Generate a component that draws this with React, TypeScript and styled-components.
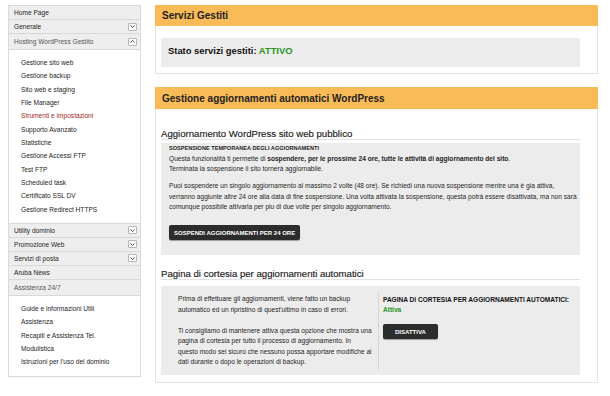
import React from 'react';
import styled, { createGlobalStyle } from 'styled-components';

const GlobalStyle = createGlobalStyle`
  html, body {
    margin: 0;
    padding: 0;
    background: #ffffff;
  }
  body {
    font-family: "Liberation Sans", Arial, Helvetica, sans-serif;
    color: #222222;
  }
  * {
    box-sizing: border-box;
  }
`;

type MenuEntry = {
  label: string;
  chevron?: 'down' | 'up';
  open?: boolean;
  children?: { label: string; active?: boolean }[];
};

const menu: MenuEntry[] = [
  { label: 'Home Page' },
  { label: 'Generale', chevron: 'down' },
  {
    label: 'Hosting WordPress Gestito',
    chevron: 'up',
    open: true,
    children: [
      { label: 'Gestione sito web' },
      { label: 'Gestione backup' },
      { label: 'Sito web e staging' },
      { label: 'File Manager' },
      { label: 'Strumenti e impostazioni', active: true },
      { label: 'Supporto Avanzato' },
      { label: 'Statistiche' },
      { label: 'Gestione Accessi FTP' },
      { label: 'Test FTP' },
      { label: 'Scheduled task' },
      { label: 'Certificato SSL DV' },
      { label: 'Gestione Redirect HTTPS' },
    ],
  },
  { label: 'Utility dominio', chevron: 'down' },
  { label: 'Promozione Web', chevron: 'down' },
  { label: 'Servizi di posta', chevron: 'down' },
  { label: 'Aruba News' },
  {
    label: 'Assistenza 24/7',
    open: true,
    children: [
      { label: 'Guide e informazioni Utili' },
      { label: 'Assistenza' },
      { label: 'Recapiti e Assistenza Tel.' },
      { label: 'Modulistica' },
      { label: "Istruzioni per l'uso del dominio" },
    ],
  },
];

// courtesy column keeps the original line breaks
const courtesyParas = [
  [
    'Prima di effettuare gli aggiornamenti, viene fatto un backup',
    "automatico ed un ripristino di quest'ultimo in caso di errori.",
  ],
  [
    'Ti consigliamo di mantenere attiva questa opzione che mostra una',
    'pagina di cortesia per tutto il processo di aggiornamento. In',
    'questo modo sei sicuro che nessuno possa apportare modifiche ai',
    'dati durante o dopo le operazioni di backup.',
  ],
];

const Chevron = ({ dir }: { dir: 'down' | 'up' }) => (
  <ChevronBox>
    <svg width="5" height="3" viewBox="0 0 5 3">
      <polyline
        points={dir === 'down' ? '0.5,0.5 2.5,2.5 4.5,0.5' : '0.5,2.5 2.5,0.5 4.5,2.5'}
        fill="none"
        stroke="#333"
        strokeWidth="0.9"
      />
    </svg>
  </ChevronBox>
);

const App = () => {
  return (
    <>
      <GlobalStyle />
      <Page>
        <Sidebar>
          {menu.map((entry) => (
            <React.Fragment key={entry.label}>
              <MenuRow $open={entry.open}>
                <span>{entry.label}</span>
                {entry.chevron && <Chevron dir={entry.chevron} />}
              </MenuRow>
              {entry.children && (
                <SubMenu>
                  {entry.children.map((c) => (
                    <SubItem key={c.label} $active={c.active}>
                      {c.label}
                    </SubItem>
                  ))}
                </SubMenu>
              )}
            </React.Fragment>
          ))}
        </Sidebar>

        <Main>
          <Panel>
            <PanelHeader $height={21}>Servizi Gestiti</PanelHeader>
            <StatusBody>
              <StatusBox>
                Stato servizi gestiti: <Green>ATTIVO</Green>
              </StatusBox>
            </StatusBody>
          </Panel>

          <Panel>
            <PanelHeader $height={22}>Gestione aggiornamenti automatici WordPress</PanelHeader>
            <UpdatesBody>
              <SectionTitle $gap={3}>Aggiornamento WordPress sito web pubblico</SectionTitle>
              <InfoBox>
                <Para>
                  <BoxHeading>SOSPENSIONE TEMPORANEA DEGLI AGGIORNAMENTI</BoxHeading>
                  <br />
                  Questa funzionalità ti permette di{' '}
                  <b>sospendere, per le prossime 24 ore, tutte le attività di aggiornamento del sito</b>.
                  <br />
                  Terminata la sospensione il sito tornerà aggiornabile.
                </Para>
                <Para>
                  Puoi sospendere un singolo aggiornamento al massimo 2 volte (48 ore). Se richiedi una nuova
                  sospensione mentre una è gia attiva, verranno aggiunte altre 24 ore alla data di fine
                  sospensione. Una volta attivata la sospensione, questa potrà essere disattivata, ma non sarà
                  comunque possibile attivarla per piu di due volte per singolo aggiornamento.
                </Para>
                <DarkButton $pad={5}>SOSPENDI AGGIORNAMENTI PER 24 ORE</DarkButton>
              </InfoBox>

              <SectionTitle $gap={6} $top={13}>
                Pagina di cortesia per aggiornamenti automatici
              </SectionTitle>
              <CourtesyBox>
                <CourtesyText>
                  {courtesyParas.map((lines, i) => (
                    <p key={i}>
                      {lines.map((line) => (
                        <TextLine key={line}>{line}</TextLine>
                      ))}
                    </p>
                  ))}
                </CourtesyText>
                <CourtesyStatus>
                  <StatusLabel>PAGINA DI CORTESIA PER AGGIORNAMENTI AUTOMATICI:</StatusLabel>
                  <StatusValue>Attiva</StatusValue>
                  <DarkButton $pad={12}>DISATTIVA</DarkButton>
                </CourtesyStatus>
              </CourtesyBox>
            </UpdatesBody>
          </Panel>
        </Main>
      </Page>
    </>
  );
};

const Page = styled.div`
  display: flex;
  align-items: flex-start;
  gap: 14px;
  padding: 5px 12px 0 8px;
  width: 610px;
`;

const Sidebar = styled.nav`
  width: 133px;
  flex-shrink: 0;
  border: 1px solid #dadada;
  background: #ffffff;
`;

const MenuRow = styled.div<{ $open?: boolean }>`
  display: flex;
  align-items: center;
  justify-content: space-between;
  height: ${(p) => (p.$open ? 16 : 14)}px;
  padding: 0 3px 0 5px;
  background: #eeeeee;
  border-bottom: 1px solid #d8d8d8;
  font-size: 6.6px;
  color: ${(p) => (p.$open ? '#555555' : '#1e1e1e')};
`;

const ChevronBox = styled.span`
  display: flex;
  align-items: center;
  justify-content: center;
  width: 9px;
  height: 8px;
  background: #ffffff;
  border: 1px solid #b8b8b8;
  border-radius: 1px;
`;

const SubMenu = styled.ul`
  list-style: none;
  margin: 0;
  padding: 6px 0 7px 12px;
  background: #ffffff;
  border-bottom: 1px solid #d8d8d8;
  &:last-child {
    border-bottom: none;
  }
`;

const SubItem = styled.li<{ $active?: boolean }>`
  font-size: 6.6px;
  line-height: 13.33px;
  color: ${(p) => (p.$active ? '#a02a2a' : '#1e1e1e')};
`;

const Main = styled.main`
  width: 443px;
  display: flex;
  flex-direction: column;
  gap: 13px;
`;

const Panel = styled.section`
  display: flex;
  flex-direction: column;
`;

const PanelHeader = styled.h2<{ $height: number }>`
  margin: 0;
  display: flex;
  align-items: center;
  height: ${(p) => p.$height}px;
  padding-left: 7px;
  background: #f8bb57;
  font-size: 10px;
  font-weight: 700;
  color: #222222;
`;

const StatusBody = styled.div`
  border: 1px solid #e4e4e4;
  border-top: none;
  padding: 12px 17px 6px 5px;
`;

const StatusBox = styled.div`
  height: 29px;
  padding: 7px 7px;
  background: #ececec;
  font-size: 9.4px;
  font-weight: 700;
  color: #111111;
`;

const Green = styled.span`
  color: #2a9322;
`;

const UpdatesBody = styled.div`
  border: 1px solid #e4e4e4;
  border-top: none;
  padding: 19px 17px 7px 5px;
`;

const SectionTitle = styled.h3<{ $gap: number; $top?: number }>`
  margin: ${(p) => p.$top ?? 0}px 0 ${(p) => p.$gap}px;
  font-size: 9.6px;
  font-weight: 400;
  line-height: 11px;
  color: #1a1a1a;
  -webkit-text-stroke: 0.15px #1a1a1a;
  border-bottom: 1px solid #e2e2e2;
`;

const InfoBox = styled.div`
  background: #ececec;
  padding: 0 1px 15px 8px;
  font-size: 6.6px;
  line-height: 10.5px;
  color: #1e1e1e;
`;

const Para = styled.p`
  margin: 0 0 6.5px;
`;

const BoxHeading = styled.b`
  font-size: 5.6px;
`;

const DarkButton = styled.button<{ $pad: number }>`
  display: inline-flex;
  align-items: center;
  height: 15px;
  margin-top: 6px;
  padding: 0 ${(p) => p.$pad}px;
  background: #2c2c2c;
  color: #ffffff;
  border: none;
  border-radius: 2px;
  box-shadow: 0 1px 1px rgba(0, 0, 0, 0.35);
  font-family: inherit;
  font-size: 6px;
  font-weight: 700;
`;

const CourtesyBox = styled.div`
  display: flex;
  align-items: flex-start;
  padding: 6px 0 5px;
  background: #ececec;
  font-size: 6.6px;
  line-height: 10.5px;
  color: #1e1e1e;
`;

const CourtesyText = styled.div`
  width: 218px;
  flex-shrink: 0;
  padding: 2px 4px 2px 17px;
  border-right: 1px solid #d4d4d4;
  p {
    margin: 0 0 10.5px;
  }
  p:last-child {
    margin-bottom: 0;
  }
`;

const TextLine = styled.span`
  display: block;
  white-space: nowrap;
`;

const CourtesyStatus = styled.div`
  padding: 3px 0 16px 4px;
  line-height: 9.5px;
  ${DarkButton} {
    margin-top: 10px;
  }
`;

const StatusLabel = styled.div`
  font-size: 6.55px;
  font-weight: 700;
  color: #111111;
`;

const StatusValue = styled.div`
  font-size: 6.55px;
  font-weight: 700;
  color: #2a9322;
`;

export default App;
